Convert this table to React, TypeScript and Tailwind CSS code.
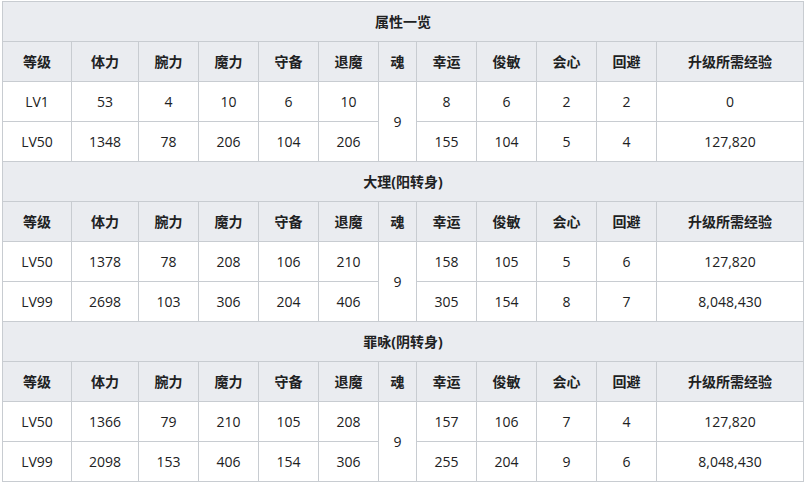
import React from "react";

type Row = { lv: string; v: string[]; soul?: string; rest: string[] };
type Section = { title: string; rows: [Row, Row] };

const headers = ["等级", "体力", "腕力", "魔力", "守备", "退魔", "魂", "幸运", "俊敏", "会心", "回避", "升级所需经验"];

const sections: Section[] = [
  {
    title: "属性一览",
    rows: [
      { lv: "LV1", v: ["53", "4", "10", "6", "10"], soul: "9", rest: ["8", "6", "2", "2", "0"] },
      { lv: "LV50", v: ["1348", "78", "206", "104", "206"], rest: ["155", "104", "5", "4", "127,820"] },
    ],
  },
  {
    title: "大理(阳转身)",
    rows: [
      { lv: "LV50", v: ["1378", "78", "208", "106", "210"], soul: "9", rest: ["158", "105", "5", "6", "127,820"] },
      { lv: "LV99", v: ["2698", "103", "306", "204", "406"], rest: ["305", "154", "8", "7", "8,048,430"] },
    ],
  },
  {
    title: "罪咏(阴转身)",
    rows: [
      { lv: "LV50", v: ["1366", "79", "210", "105", "208"], soul: "9", rest: ["157", "106", "7", "4", "127,820"] },
      { lv: "LV99", v: ["2098", "153", "406", "154", "306"], rest: ["255", "204", "9", "6", "8,048,430"] },
    ],
  },
];

const cell = "flex items-center justify-center bg-white";
const head = "flex items-center justify-center bg-[#eaecf0] font-bold";

export default function App() {
  return (
    <div
      className="pl-[2px] pt-px text-[14px] text-[#202122]"
      style={{ fontFamily: '"Open Sans", "Noto Sans CJK SC", sans-serif' }}
    >
      <div className="inline-grid grid-cols-[68px_66px_59px_59px_59px_59px_37px_59px_59px_59px_59px_146px] auto-rows-[39px] gap-px p-px bg-[#c8ccd1]">
        {sections.map((s, si) => (
          <React.Fragment key={si}>
            <div className={`${head} col-span-12`}>{s.title}</div>
            {headers.map((h) => (
              <div key={h} className={head}>
                {h}
              </div>
            ))}
            {s.rows.map((r, ri) => (
              <React.Fragment key={ri}>
                <div className={cell}>{r.lv}</div>
                {r.v.map((x, i) => (
                  <div key={"v" + i} className={cell}>
                    {x}
                  </div>
                ))}
                {r.soul && <div className={`${cell} row-span-2`}>{r.soul}</div>}
                {r.rest.map((x, i) => (
                  <div key={"r" + i} className={cell}>
                    {x}
                  </div>
                ))}
              </React.Fragment>
            ))}
          </React.Fragment>
        ))}
      </div>
    </div>
  );
}
